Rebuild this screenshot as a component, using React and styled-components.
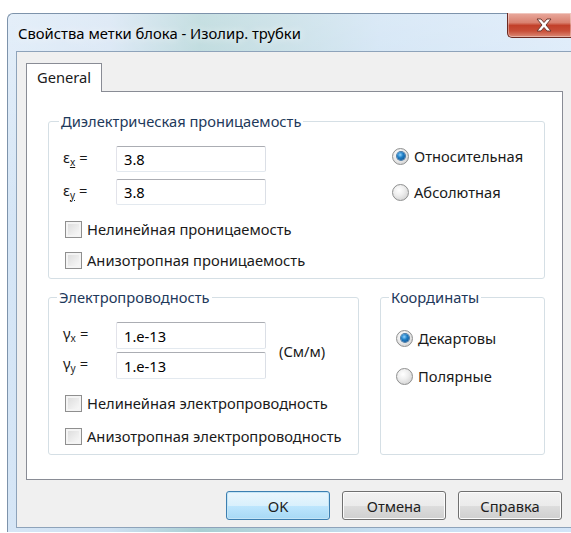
import React from 'react';
import styled, { createGlobalStyle } from 'styled-components';

const GlobalStyle = createGlobalStyle`
  html, body {
    margin: 0;
    padding: 0;
    background: #ffffff;
  }
  body {
    font-family: "Noto Sans", "Open Sans", sans-serif;
    font-size: 14.7px;
    color: #1a1a1a;
  }
  * {
    box-sizing: border-box;
  }
`;

const Screen = styled.div`
  width: 571px;
  height: 533px;
  overflow: hidden;
  padding: 13px 0 0 7px;
`;

const Frame = styled.div`
  display: flex;
  flex-direction: column;
  padding: 0 0 4px 8px;
  border-top-left-radius: 6px;
  border-left: 1px solid #7d93ab;
  border-top: 1px solid #7d93ab;
  background:
    linear-gradient(180deg, rgba(255, 255, 255, 0.35) 0%, rgba(255, 255, 255, 0) 40%),
    linear-gradient(90deg, #d6e6f6 0%, #cfe0f2 18%, #a9cfd3 34%, #b8d6e0 50%, #c7def2 66%, #d3e5f8 100%);
`;

const TitleBar = styled.div`
  display: flex;
  align-items: flex-start;
  height: 37px;
`;

const Caption = styled.div`
  padding: 9px 0 0 2px;
  font-size: 14.8px;
  line-height: 20px;
  color: #000;
  text-shadow: 0 0 8px rgba(255, 255, 255, 0.9);
`;

const CloseButton = styled.div`
  margin-left: auto;
  margin-top: -1px;
  width: 64px;
  height: 25px;
  display: flex;
  align-items: center;
  justify-content: center;
  padding-left: 8px;
  border: 1px solid #6b2a22;
  border-top: none;
  border-right: none;
  border-bottom-left-radius: 5px;
  background: linear-gradient(180deg, #e9aa9e 0%, #d98170 40%, #c2402a 52%, #c84e38 75%, #dc8a76 100%);
  box-shadow: inset 0 0 0 1px rgba(255, 255, 255, 0.35);
`;

const Client = styled.div`
  display: flex;
  flex-direction: column;
  background: #f0f0f0;
  border-top: 1px solid #8ea3ba;
  border-left: 1px solid #8ea3ba;
  border-bottom: 1px solid #8ea3ba;
  padding: 11px 0 7px 9px;
`;

const TabStrip = styled.div`
  display: flex;
`;

const Tab = styled.div`
  position: relative;
  z-index: 1;
  width: 76px;
  height: 29px;
  margin-bottom: -1px;
  padding: 3px 0 0 10px;
  line-height: 20px;
  background: #ffffff;
  border: 1px solid #898c95;
  border-bottom: none;
`;

const Panel = styled.div`
  width: 537px;
  height: 389px;
  background: #ffffff;
  border: 1px solid #898c95;
  padding: 19px 17px 0 21px;
  display: flex;
  flex-direction: column;
  gap: 8px;
`;

const Group = styled.fieldset`
  margin: 0;
  width: ${(p) => p.$width}px;
  height: 168px;
  border: 1px solid #d5dfe5;
  border-radius: 3px;
  padding: ${(p) => p.$top}px 0 0 ${(p) => p.$left}px;
  min-width: 0;
`;

const Legend = styled.legend`
  margin-left: ${(p) => p.$offset}px;
  padding: 0 2px;
  line-height: 20px;
  color: #1e395b;
`;

const GroupRow = styled.div`
  display: flex;
  gap: 21px;
`;

const Split = styled.div`
  display: flex;
`;

const LeftColumn = styled.div`
  width: ${(p) => p.$width}px;
  display: flex;
  flex-direction: column;
`;

const Fields = styled.div`
  display: flex;
  align-items: center;
`;

const FieldStack = styled.div`
  display: flex;
  flex-direction: column;
  gap: ${(p) => p.$gap}px;
`;

const FieldRow = styled.div`
  display: flex;
  align-items: center;
`;

const FieldLabel = styled.span`
  width: 53px;
  line-height: 20px;
  white-space: nowrap;
`;

const Sub = styled.sub`
  font-size: 10px;
  vertical-align: -3px;
  text-decoration: ${(p) => (p.$underline ? 'underline' : 'none')};
  margin-right: 4px;
`;

const TextBox = styled.input`
  width: 150px;
  height: ${(p) => p.$height}px;
  padding: 0 7px;
  font: inherit;
  color: #000;
  background: #ffffff;
  border: 1px solid;
  border-color: #abadb3 #dbdfe6 #e3e9ef #e2e3ea;
  border-radius: 2px;
  outline: none;
`;

const Units = styled.span`
  margin-left: 13px;
  line-height: 20px;
`;

const CheckList = styled.div`
  display: flex;
  flex-direction: column;
  gap: ${(p) => p.$gap}px;
  margin: 14px 0 0 2px;
`;

const OptionRow = styled.label`
  display: flex;
  align-items: center;
  gap: 5px;
  height: 20px;
  line-height: 20px;
  white-space: nowrap;
`;

const CheckBox = styled.span`
  width: 17px;
  height: 17px;
  border: 1px solid #8f8f8f;
  background: linear-gradient(135deg, #d9d9d9 0%, #eeeeee 60%, #fbfbfb 100%);
  box-shadow: inset 0 0 0 2px #f4f4f4;
  flex-shrink: 0;
`;

const RadioList = styled.div`
  display: flex;
  flex-direction: column;
  gap: ${(p) => p.$gap}px;
  padding-top: ${(p) => p.$top}px;
`;

const Radio = styled.span`
  width: 17px;
  height: 17px;
  border-radius: 50%;
  border: 1px solid #8e8f8f;
  flex-shrink: 0;
  display: flex;
  align-items: center;
  justify-content: center;
  background: radial-gradient(circle at 40% 35%, #ffffff 0%, #eeeeee 40%, #c8c8c8 100%);

  &::after {
    content: '';
    width: 8px;
    height: 8px;
    border-radius: 50%;
    display: ${(p) => (p.$checked ? 'block' : 'none')};
    background: radial-gradient(circle at 40% 35%, #8fd2ff 0%, #1f7fc6 40%, #0a4583 100%);
    box-shadow: 0 0 0 1px #4b7aa6;
  }
`;

const ButtonRow = styled.div`
  display: flex;
  justify-content: flex-end;
  gap: 12px;
  margin-top: 11px;
  padding-right: 9px;
`;

const Button = styled.button`
  width: 104px;
  height: 29px;
  font: inherit;
  color: #1e1e1e;
  border-radius: 3px;
  border: 1px solid ${(p) => (p.$default ? '#3c7fb1' : '#707070')};
  background: ${(p) =>
    p.$default
      ? 'linear-gradient(180deg, #eaf6fd 0%, #d9f0fc 50%, #bee6fd 51%, #a7d9f5 100%)'
      : 'linear-gradient(180deg, #f2f2f2 0%, #ebebeb 50%, #dddddd 51%, #cfcfcf 100%)'};
  box-shadow: inset 0 0 0 1px ${(p) => (p.$default ? '#c4e5f6' : '#fcfcfc')};
  padding: 0;
`;

const CloseGlyph = () => (
  <svg width="20" height="14" viewBox="0 0 20 14">
    <path
      d="M3 1h4l3 3.5L13 1h4l-5 6 5 6h-4l-3-3.5L7 13H3l5-6z"
      fill="#ffffff"
      stroke="#6e3a33"
      strokeWidth="1"
      strokeLinejoin="round"
    />
  </svg>
);

const Option = ({ kind, checked, children }) => (
  <OptionRow>
    {kind === 'radio' ? <Radio $checked={checked} /> : <CheckBox />}
    {children}
  </OptionRow>
);

const Field = ({ symbol, sub, underline, value, height }) => (
  <FieldRow>
    <FieldLabel>
      {symbol}
      <Sub $underline={underline}>{sub}</Sub>=
    </FieldLabel>
    <TextBox $height={height} defaultValue={value} readOnly />
  </FieldRow>
);

export default function App() {
  return (
    <>
      <GlobalStyle />
      <Screen>
        <Frame>
          <TitleBar>
            <Caption>Свойства метки блока - Изолир. трубки</Caption>
            <CloseButton>
              <CloseGlyph />
            </CloseButton>
          </TitleBar>
          <Client>
            <TabStrip>
              <Tab>General</Tab>
            </TabStrip>
            <Panel>
              <Group $width={497} $top={15} $left={14}>
                <Legend $offset={-4}>Диэлектрическая проницаемость</Legend>
                <Split>
                  <LeftColumn $width={329}>
                    <FieldStack $gap={7}>
                      <Field symbol="ε" sub="x" underline value="3.8" height={26} />
                      <Field symbol="ε" sub="y" underline value="3.8" height={26} />
                    </FieldStack>
                    <CheckList $gap={11}>
                      <Option kind="check">Нелинейная проницаемость</Option>
                      <Option kind="check">Анизотропная проницаемость</Option>
                    </CheckList>
                  </LeftColumn>
                  <RadioList $gap={16} $top={0}>
                    <Option kind="radio" checked>Относительная</Option>
                    <Option kind="radio">Абсолютная</Option>
                  </RadioList>
                </Split>
              </Group>
              <GroupRow>
                <Group $width={311} $top={15} $left={14}>
                  <Legend $offset={-6}>Электропроводность</Legend>
                  <Fields>
                    <FieldStack $gap={3}>
                      <Field symbol="γ" sub="x" value="1.e-13" height={27} />
                      <Field symbol="γ" sub="y" value="1.e-13" height={27} />
                    </FieldStack>
                    <Units>(См/м)</Units>
                  </Fields>
                  <CheckList $gap={13}>
                    <Option kind="check">Нелинейная электропроводность</Option>
                    <Option kind="check">Анизотропная электропроводность</Option>
                  </CheckList>
                </Group>
                <Group $width={165} $top={21} $left={15}>
                  <Legend $offset={-7}>Координаты</Legend>
                  <RadioList $gap={18} $top={0}>
                    <Option kind="radio" checked>Декартовы</Option>
                    <Option kind="radio">Полярные</Option>
                  </RadioList>
                </Group>
              </GroupRow>
            </Panel>
            <ButtonRow>
              <Button $default>OK</Button>
              <Button>Отмена</Button>
              <Button>Справка</Button>
            </ButtonRow>
          </Client>
        </Frame>
      </Screen>
    </>
  );
}
